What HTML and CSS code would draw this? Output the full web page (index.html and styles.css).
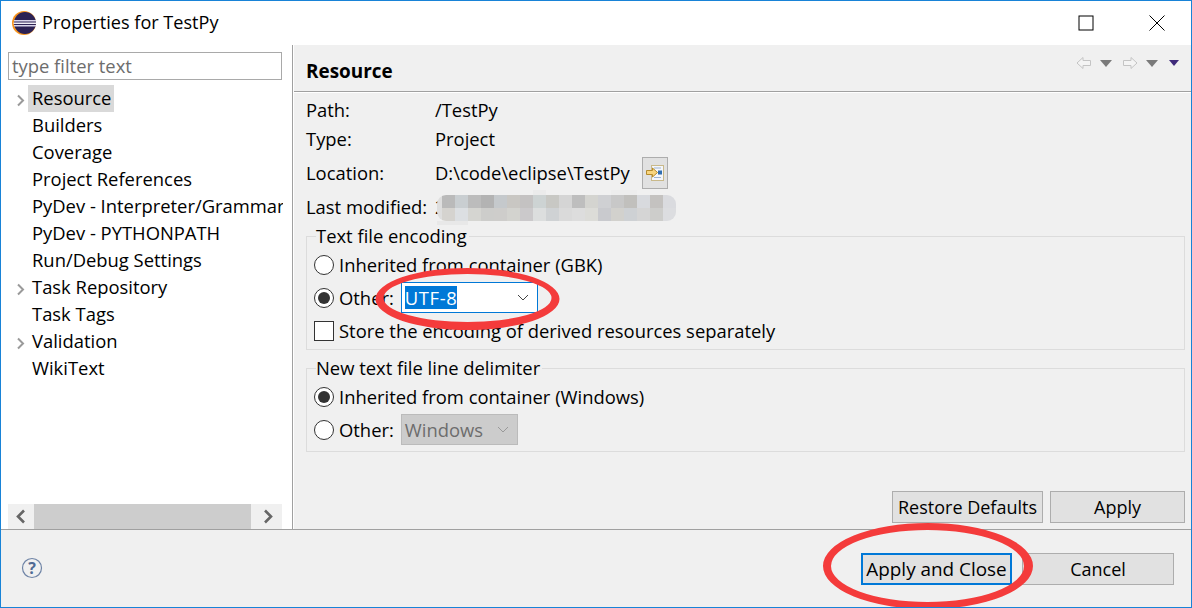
FILE: index.html
```html
<!DOCTYPE html>
<html lang="en">
<head>
  <meta charset="UTF-8">
  <title>Properties for TestPy</title>
  <link rel="stylesheet" href="styles.css">
</head>
<body>
  <div class="dialog">
    <!-- title bar -->
    <div class="titlebar">
      <svg class="app-icon" width="24" height="24" viewBox="0 0 24 24">
        <circle cx="12" cy="12" r="12" fill="#f7941e"/>
        <circle cx="13" cy="12" r="11" fill="#2c2255"/>
        <rect x="2" y="9" width="22" height="1.5" fill="#d8d4ea"/>
        <rect x="1.5" y="11.500" width="23" height="1.5" fill="#f0eef8"/>
        <rect x="2" y="14" width="22" height="1.5" fill="#d8d4ea"/>
      </svg>
      <span class="title">Properties for TestPy</span>
      <svg class="win-btn" width="16" height="16" viewBox="0 0 16 16">
        <rect x="1" y="1" width="14" height="14" fill="none" stroke="#000" stroke-width="1"/>
      </svg>
      <svg class="win-btn win-close" width="16" height="16" viewBox="0 0 16 16">
        <path d="M0.5 0.5L15.5 15.5M15.5 0.5L0.5 15.500" stroke="#000" stroke-width="1" fill="none"/>
      </svg>
    </div>

    <div class="main">
      <!-- left tree -->
      <div class="sidebar">
        <div class="filter">type filter text</div>
        <ul class="tree">
          <li class="tree-row"><svg class="twisty" width="20" height="27" viewBox="0 0 20 27"><path d="M10 10.500L15 15.500L10 20.500" fill="none" stroke="#9a9a9a" stroke-width="2"/></svg><span class="tree-label selected">Resource</span></li>
          <li class="tree-row"><span class="tree-label indent">Builders</span></li>
          <li class="tree-row"><span class="tree-label indent">Coverage</span></li>
          <li class="tree-row"><span class="tree-label indent">Project References</span></li>
          <li class="tree-row"><span class="tree-label indent">PyDev - Interpreter/Grammar</span></li>
          <li class="tree-row"><span class="tree-label indent">PyDev - PYTHONPATH</span></li>
          <li class="tree-row"><span class="tree-label indent">Run/Debug Settings</span></li>
          <li class="tree-row"><svg class="twisty" width="20" height="27" viewBox="0 0 20 27"><path d="M10 10.500L15 15.500L10 20.500" fill="none" stroke="#9a9a9a" stroke-width="2"/></svg><span class="tree-label">Task Repository</span></li>
          <li class="tree-row"><span class="tree-label indent">Task Tags</span></li>
          <li class="tree-row"><svg class="twisty" width="20" height="27" viewBox="0 0 20 27"><path d="M10 10.500L15 15.500L10 20.500" fill="none" stroke="#9a9a9a" stroke-width="2"/></svg><span class="tree-label">Validation</span></li>
          <li class="tree-row"><span class="tree-label indent">WikiText</span></li>
        </ul>
        <div class="hscroll">
          <svg class="scroll-arrow" width="26" height="25" viewBox="0 0 26 25"><path d="M16 6.500L10 12.500L16 18.500" fill="none" stroke="#666" stroke-width="2.6"/></svg>
          <div class="scroll-thumb"></div>
          <svg class="scroll-arrow" width="31" height="25" viewBox="0 0 31 25"><path d="M14 6.500L20 12.500L14 18.500" fill="none" stroke="#666" stroke-width="2.6"/></svg>
        </div>
      </div>

      <!-- right page -->
      <div class="page">
        <div class="page-head">
          <h2 class="page-title">Resource</h2>
          <div class="nav-icons">
            <svg width="16" height="14" viewBox="0 0 16 14"><path d="M1 7L7 1.500V4.500H14.500V9.500H7V12.500Z" fill="#f4f4f4" stroke="#c4c4c4"/></svg>
            <svg class="nav-drop" width="12" height="7" viewBox="0 0 12 7"><path d="M0 0H12L6 7Z" fill="#7a7a7a"/></svg>
            <svg class="nav-fwd" width="16" height="14" viewBox="0 0 16 14"><path d="M15 7L9 1.500V4.500H1.500V9.500H9V12.500Z" fill="#f4f4f4" stroke="#c4c4c4"/></svg>
            <svg class="nav-drop" width="12" height="7" viewBox="0 0 12 7"><path d="M0 0H12L6 7Z" fill="#7a7a7a"/></svg>
            <svg class="nav-menu" width="10" height="6" viewBox="0 0 10 6"><path d="M0 0H10L5 6Z" fill="#3f2a7a"/></svg>
          </div>
        </div>

        <div class="page-body">
          <div class="info-row row-path"><span class="info-label">Path:</span><span>/TestPy</span></div>
          <div class="info-row row-type"><span class="info-label">Type:</span><span>Project</span></div>
          <div class="info-row row-location">
            <span class="info-label">Location:</span><span>D:\code\eclipse\TestPy</span>
            <button class="btn btn-icon">
              <svg width="18" height="16" viewBox="0 0 18 16">
                <rect x="5.500" y="0.500" width="12" height="15" fill="#f4f6fa" stroke="#c9b98a"/>
                <path d="M8 3H15M8 12.500H15" stroke="#9db4d2"/>
                <rect x="12" y="5.500" width="4" height="4" fill="#2f6db0"/>
                <path d="M0.500 5.500H6.500V3L11.500 7.500L6.500 12V9.500H0.500Z" fill="#f8d57e" stroke="#b58a2a"/>
              </svg>
            </button>
          </div>
          <div class="info-row row-modified">
            <span class="info-label">Last modified:</span><span>2</span>
            <svg class="blur" width="240" height="36" viewBox="0 0 240 36">
              <defs><clipPath id="blur-clip"><rect y="5" width="239" height="26" rx="9"/></clipPath></defs>
              <g shape-rendering="crispEdges">
                <rect x="96" width="13" height="5" fill="#ebebeb"/>
                <rect x="174" width="26" height="5" fill="#ededed"/>
                <rect x="0" y="31" width="31" height="4" fill="#e8e8e8"/>
              </g>
              <g clip-path="url(#blur-clip)" shape-rendering="crispEdges">
                <rect y="5" width="5" height="26" fill="#dedede"/>
                <rect x="5" y="5" width="13" height="13" fill="#bababa"/>
                <rect x="18" y="5" width="13" height="13" fill="#c9ced1"/>
                <rect x="31" y="5" width="13" height="13" fill="#bcbcbc"/>
                <rect x="44" y="5" width="13" height="13" fill="#b3b3b3"/>
                <rect x="57" y="5" width="13" height="13" fill="#c5c9cc"/>
                <rect x="70" y="5" width="13" height="13" fill="#c9c7c3"/>
                <rect x="83" y="5" width="13" height="13" fill="#c4c2c2"/>
                <rect x="96" y="5" width="13" height="13" fill="#cdd3d3"/>
                <rect x="109" y="5" width="13" height="13" fill="#c8c8c4"/>
                <rect x="122" y="5" width="13" height="13" fill="#d5d5d5"/>
                <rect x="135" y="5" width="13" height="13" fill="#bebebe"/>
                <rect x="148" y="5" width="13" height="13" fill="#d4d4d0"/>
                <rect x="161" y="5" width="13" height="13" fill="#cfd0d3"/>
                <rect x="174" y="5" width="13" height="13" fill="#c8c8c8"/>
                <rect x="187" y="5" width="13" height="13" fill="#c1c0bd"/>
                <rect x="200" y="5" width="13" height="13" fill="#d8dade"/>
                <rect x="213" y="5" width="13" height="13" fill="#c4c2c0"/>
                <rect x="226" y="5" width="13" height="13" fill="#dadbdf"/>
                <rect x="5" y="18" width="13" height="13" fill="#d5d3cf"/>
                <rect x="18" y="18" width="13" height="13" fill="#dcdfe2"/>
                <rect x="31" y="18" width="13" height="13" fill="#d5d5d1"/>
                <rect x="44" y="18" width="13" height="13" fill="#cdcdcb"/>
                <rect x="57" y="18" width="13" height="13" fill="#cecdcb"/>
                <rect x="70" y="18" width="13" height="13" fill="#d3d3cf"/>
                <rect x="83" y="18" width="13" height="13" fill="#cbc9cb"/>
                <rect x="96" y="18" width="13" height="13" fill="#dcdede"/>
                <rect x="109" y="18" width="13" height="13" fill="#cfd2d4"/>
                <rect x="122" y="18" width="13" height="13" fill="#dadada"/>
                <rect x="135" y="18" width="13" height="13" fill="#dddddd"/>
                <rect x="148" y="18" width="13" height="13" fill="#dcdcd8"/>
                <rect x="161" y="18" width="13" height="13" fill="#c9cace"/>
                <rect x="174" y="18" width="13" height="13" fill="#d2d1cd"/>
                <rect x="187" y="18" width="13" height="13" fill="#ced1d4"/>
                <rect x="200" y="18" width="13" height="13" fill="#d5d5d5"/>
                <rect x="213" y="18" width="13" height="13" fill="#cdcdcb"/>
                <rect x="226" y="18" width="13" height="13" fill="#dcdde0"/>
              </g>
            </svg>
          </div>

          <fieldset class="group group-encoding">
            <legend>Text file encoding</legend>
            <div class="opt-row">
              <span class="radio"></span><span>Inherited from container (GBK)</span>
            </div>
            <div class="opt-row">
              <span class="radio checked"></span><span>Other:</span>
              <span class="combo combo-focus"><span class="combo-text">UTF-8</span>
                <svg width="12" height="7" viewBox="0 0 12 7"><path d="M1 1L6 6L11 1" fill="none" stroke="#444"/></svg>
              </span>
            </div>
            <div class="opt-row">
              <span class="checkbox"></span><span>Store the encoding of derived resources separately</span>
            </div>
          </fieldset>

          <fieldset class="group group-delim">
            <legend>New text file line delimiter</legend>
            <div class="opt-row">
              <span class="radio checked"></span><span>Inherited from container (Windows)</span>
            </div>
            <div class="opt-row">
              <span class="radio"></span><span>Other:</span>
              <span class="combo combo-off"><span>Windows</span>
                <svg width="12" height="7" viewBox="0 0 12 7"><path d="M1 1L6 6L11 1" fill="none" stroke="#999"/></svg>
              </span>
            </div>
          </fieldset>

          <div class="page-actions">
            <button class="btn btn-restore">Restore Defaults</button>
            <button class="btn btn-apply">Apply</button>
          </div>
        </div>
      </div>
    </div>

    <!-- bottom buttons -->
    <div class="footer">
      <svg class="help" width="22" height="22" viewBox="0 0 22 22">
        <circle cx="11" cy="11" r="9.500" fill="none" stroke="#6f84a6" stroke-width="1.2"/>
        <text x="11" y="17" class="help-mark">?</text>
      </svg>
      <button class="btn btn-default">Apply and Close</button>
      <button class="btn btn-cancel">Cancel</button>
    </div>

    <!-- red marks drawn over the screenshot -->
    <svg class="marks" width="1192" height="608" viewBox="0 0 1192 608">
      <path fill="#f43b3b" fill-rule="evenodd" d="M375.500 299a92 31 0 1 0 184 0a92 31 0 1 0 -184 0ZM383.500 298a84 24 0 1 0 168 0a84 24 0 1 0 -168 0Z"/>
      <path fill="#f43b3b" fill-rule="evenodd" d="M823 566a105 43 0 1 0 210 0a105 43 0 1 0 -210 0ZM831 566a96.500 36 0 1 0 193 0a96.500 36 0 1 0 -193 0Z"/>
    </svg>
  </div>
</body>
</html>
```

FILE: styles.css
```css
* { box-sizing: border-box; margin: 0; padding: 0; }

body {
  font-family: "Open Sans", "Noto Sans", sans-serif;
  font-size: 18.4px;
  color: #000;
  background: #fff;
  width: 1192px;
  height: 608px;
  overflow: hidden;
}

.dialog {
  position: relative;
  width: 1192px;
  height: 608px;
  border: 1px solid #1883d7;
  display: flex;
  flex-direction: column;
  overflow: hidden;
  background: #f0f0f0;
}

/* title bar */
.titlebar {
  height: 44px;
  background: #fff;
  display: flex;
  align-items: center;
  padding-left: 11px;
  flex: none;
}

.app-icon { margin-right: 6px; }

.title {
  font-size: 18.1px;
  flex: 1;
  padding-bottom: 2px;
}

.win-btn { margin-right: 55px; }
.win-close { margin-right: 26px; }

/* main */
.main {
  height: 485px;
  display: flex;
  flex: none;
  border-bottom: 1px solid #a0a0a0;
}

.sidebar {
  width: 292px;
  flex: none;
  background: #fff;
  border-right: 1px solid #a0a0a0;
  padding: 7px 9px 0 7px;
  display: flex;
  flex-direction: column;
}

.filter {
  height: 28px;
  border: 1px solid #a9a9a9;
  color: #6d6d6d;
  padding-left: 3px;
  line-height: 26px;
  flex: none;
  margin-right: 1px;
}

.tree {
  list-style: none;
  flex: 1;
  margin-top: 5px;
  overflow: hidden;
}

.tree-row {
  height: 27px;
  display: flex;
  align-items: center;
  white-space: nowrap;
}

.twisty { flex: none; }

.tree-label {
  height: 27px;
  line-height: 26px;
  padding: 0 3px 0 4px;
}

.indent { margin-left: 20px; }

.selected { background: #d9d9d9; }

.hscroll {
  height: 25px;
  background: #f0f0f0;
  display: flex;
  flex: none;
  margin-right: 1px;
}

.scroll-thumb {
  width: 217px;
  background: #cdcdcd;
}

/* right page */
.page {
  flex: 1;
  background: #f0f0f0;
  display: flex;
  flex-direction: column;
  border-left: 1px solid #fff;
}

.page-head {
  height: 47px;
  flex: none;
  border-bottom: 1px solid #a0a0a0;
  box-shadow: 0 1px 0 #fff;
  display: flex;
  justify-content: space-between;
  padding: 10px 12px 0 12px;
}

.page-title {
  font-size: 18.9px;
  font-weight: 700;
  line-height: 32px;
}

.nav-icons {
  display: flex;
  align-items: center;
  height: 16px;
}

.nav-drop { margin-left: 8px; }
.nav-fwd { margin-left: 10px; }
.nav-menu { margin-left: 11px; }

.page-body {
  flex: 1;
  display: flex;
  flex-direction: column;
  padding: 0 6px 0 12px;
}

.info-row {
  display: flex;
  align-items: center;
  position: relative;
  white-space: nowrap;
}

.info-label { width: 129px; flex: none; }

.row-path { height: 29px; margin-top: 3px; }
.row-type { height: 29px; }
.row-location { height: 39px; }
.row-modified { height: 29px; }

.blur {
  position: absolute;
  left: 131px;
  top: -2px;
}

.btn {
  font-family: inherit;
  font-size: 18px;
  background: #e1e1e1;
  border: 1px solid #adadad;
  color: #000;
}

.btn-icon {
  width: 26px;
  height: 32px;
  margin-left: 12px;
  display: flex;
  align-items: center;
  justify-content: center;
}

/* groups */
.group {
  border: 1px solid #dcdcdc;
  padding: 0 0 0 7px;
}

.group legend {
  margin-left: 2px;
  padding: 0 2px 0 0;
  line-height: 24px;
  font-size: 18.4px;
}

.group-encoding {
  height: 126px;
  margin-top: 3px;
}

.group-delim {
  height: 96px;
  margin-top: 6px;
}

.opt-row {
  height: 33px;
  display: flex;
  align-items: center;
  white-space: nowrap;
}

.radio, .checkbox {
  width: 20px;
  height: 20px;
  background: #fff;
  border: 1px solid #333;
  flex: none;
  margin-right: 5px;
}

.radio { border-radius: 50%; position: relative; }

.checked::after {
  content: "";
  position: absolute;
  left: 3px;
  top: 3px;
  width: 12px;
  height: 12px;
  border-radius: 50%;
  background: #333;
}

.combo {
  height: 31px;
  margin-left: 7px;
  display: flex;
  align-items: center;
  justify-content: space-between;
  padding: 0 8px 0 3px;
  flex: none;
}

.combo-focus {
  width: 137px;
  background: #fff;
  border: 1px solid #0078d7;
}

.combo-text {
  background: #0078d7;
  color: #fff;
  line-height: 23px;
  letter-spacing: 0.6px;
}

.combo-off {
  width: 117px;
  background: #cccccc;
  border: 1px solid #bbb;
  color: #6d6d6d;
}

.page-actions {
  margin-top: auto;
  display: flex;
  justify-content: flex-end;
  gap: 7px;
  padding-bottom: 6px;
}

.page-actions .btn { height: 32px; }
.btn-restore { width: 151px; }
.btn-apply { width: 135px; }

/* footer */
.footer {
  flex: 1;
  display: flex;
  align-items: center;
  padding: 0 17px 0 20px;
}

.help {
  margin-right: auto;
  margin-bottom: 2px;
}

.help-mark {
  font-family: "Open Sans", sans-serif;
  font-size: 16px;
  font-weight: 700;
  fill: #4f6a94;
  text-anchor: middle;
}

.footer .btn { height: 32px; }

.btn-default {
  width: 151px;
  font-size: 18.9px;
  border-color: #0078d7;
  outline: 1px solid #0078d7;
  outline-offset: -2px;
}

.btn-cancel {
  width: 152px;
  margin-left: 10px;
}

.marks {
  position: absolute;
  left: -1px;
  top: -1px;
  pointer-events: none;
}
```
